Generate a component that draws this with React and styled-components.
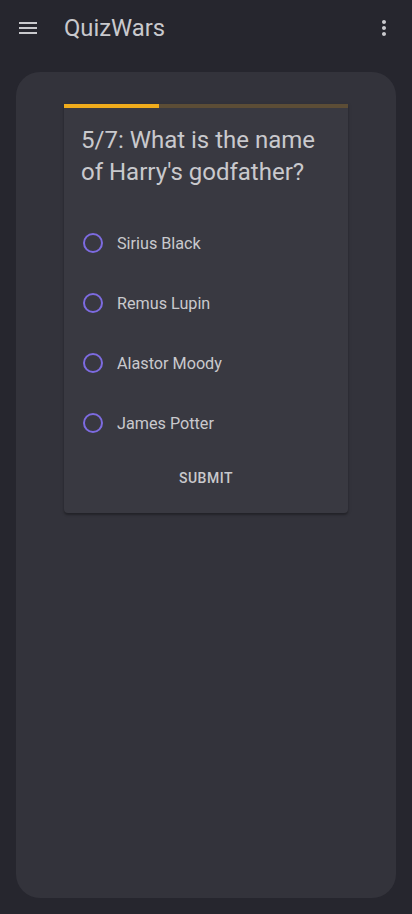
import React from "react";
import styled, { createGlobalStyle } from "styled-components";

const Global = createGlobalStyle`
  html, body { margin: 0; padding: 0; background: #26262e; }
  body { font-family: Roboto, "Noto Sans", sans-serif; }
  * { box-sizing: border-box; }
`;

const Page = styled.div`
  width: 412px;
  height: 914px;
  display: flex;
  flex-direction: column;
  background: #26262e;
`;

const AppBar = styled.header`
  height: 56px;
  display: flex;
  align-items: center;
  padding: 0 16px 0 16px;
  color: #c9c9cd;
`;

const IconButton = styled.button`
  width: 24px;
  height: 24px;
  padding: 0;
  border: 0;
  background: none;
  display: flex;
  align-items: center;
  justify-content: center;
  color: #c9c9cd;
`;

const Title = styled.h1`
  margin: 0 0 0 24px;
  flex: 1;
  font-size: 23.8px;
  font-weight: 400;
  letter-spacing: 0;
`;

const Panel = styled.main`
  flex: 1;
  margin: 16px 16px 16px 16px;
  background: #33333b;
  border-radius: 24px;
  padding: 32px 48px;
`;

const Card = styled.section`
  background: #393941;
  border-radius: 0 0 4px 4px;
  box-shadow: 0 2px 2px rgba(0,0,0,0.25), 0 1px 4px rgba(0,0,0,0.12);
  display: flex;
  flex-direction: column;
  padding-bottom: 17px;
`;

const Track = styled.div`
  height: 4px;
  background: #5c4d36;
`;

const Fill = styled.div`
  height: 100%;
  background: #f0ac1c;
`;

const Question = styled.h2`
  margin: 0;
  padding: 16px 17px 25px;
  font-size: 24px;
  line-height: 32px;
  font-weight: 400;
  color: #c9c9cd;
`;

const Option = styled.label`
  height: 60px;
  display: flex;
  align-items: center;
  padding-left: 19px;
  gap: 14px;
  font-size: 16.2px;
  color: #c9c9cd;
`;

const Radio = styled.span`
  width: 20px;
  height: 20px;
  border-radius: 50%;
  border: 2px solid #7d6be0;
`;

const Submit = styled.button`
  align-self: center;
  margin-top: 7px;
  height: 36px;
  padding: 0 16px;
  border: 0;
  background: none;
  font-family: Roboto, sans-serif;
  font-size: 14px;
  font-weight: 500;
  letter-spacing: 0.5px;
  color: #c9c9cd;
`;

const options = ["Sirius Black", "Remus Lupin", "Alastor Moody", "James Potter"];

export default function App() {
  return (
    <Page>
      <Global />
      <AppBar>
        <IconButton aria-label="menu">
          <svg width="24" height="24" viewBox="0 0 24 24" fill="currentColor">
            <path d="M3 18h18v-2H3v2zm0-5h18v-2H3v2zm0-7v2h18V6H3z" />
          </svg>
        </IconButton>
        <Title>QuizWars</Title>
        <IconButton aria-label="more">
          <svg width="24" height="24" viewBox="0 0 24 24" fill="currentColor">
            <path d="M12 8c1.1 0 2-.9 2-2s-.9-2-2-2-2 .9-2 2 .9 2 2 2zm0 2c-1.1 0-2 .9-2 2s.9 2 2 2 2-.9 2-2-.9-2-2-2zm0 6c-1.1 0-2 .9-2 2s.9 2 2 2 2-.9 2-2-.9-2-2-2z" />
          </svg>
        </IconButton>
      </AppBar>
      <Panel>
        <Card>
          <Track>
            <Fill style={{ width: "33.3%" }} />
          </Track>
          <Question>5/7: What is the name of Harry's godfather?</Question>
          {options.map((o) => (
            <Option key={o}>
              <Radio />
              {o}
            </Option>
          ))}
          <Submit>SUBMIT</Submit>
        </Card>
      </Panel>
    </Page>
  );
}
